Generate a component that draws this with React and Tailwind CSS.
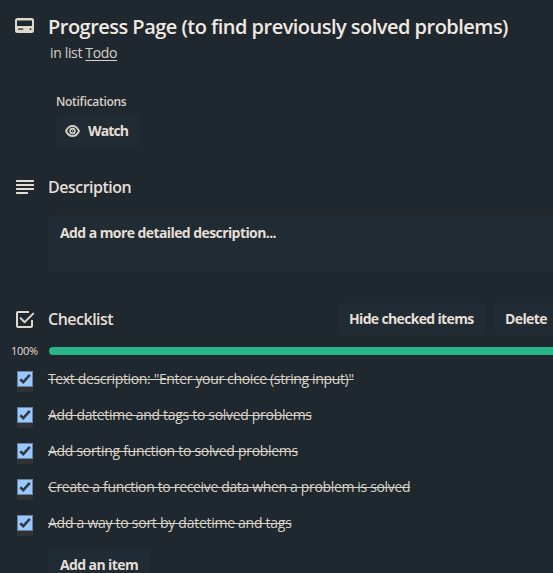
import React from "react";

const items = [
  { text: 'Text description: "Enter your choice (string input)"', tracking: "tracking-[-0.35px]" },
  { text: "Add datetime and tags to solved problems", tracking: "tracking-[-0.31px]" },
  { text: "Add sorting function to solved problems", tracking: "tracking-[-0.3px]" },
  { text: "Create a function to receive data when a problem is solved", tracking: "tracking-[-0.34px]" },
  { text: "Add a way to sort by datetime and tags", tracking: "tracking-[-0.27px]" },
];

function CardIcon() {
  return (
    <svg width="20" height="16" viewBox="0 0 20 16" className="block">
      <path
        fill="#ded8cd"
        fillRule="evenodd"
        d="M2.500 0h14A2.500 2.500 0 0 1 19 2.500v10a2.500 2.500 0 0 1-2.500 2.500h-14A2.500 2.500 0 0 1 0 12.500v-10A2.500 2.500 0 0 1 2.500 0zM2 2.500v5.500h15v-5.500zM3 10.600v1.200h5.300v-1.200zM15.500 10.300a.9.9 0 1 0 0 1.800.9.9 0 0 0 0-1.800z"
      />
    </svg>
  );
}

function DescriptionIcon() {
  return (
    <svg width="18" height="14" viewBox="0 0 18 14" className="block" fill="#e4ddd2">
      <rect width="18" height="2" rx=".5" />
      <rect y="4" width="18" height="2" rx=".5" />
      <rect y="8" width="18" height="2" rx=".5" />
      <rect y="12" width="12" height="2" rx=".5" />
    </svg>
  );
}

function ChecklistIcon() {
  return (
    <svg width="19" height="17" viewBox="0 0 19 17" className="block" fill="none" stroke="#ded8cd" strokeWidth="2">
      <path d="M13 1H2a1 1 0 0 0-1 1v13a1 1 0 0 0 1 1h13a1 1 0 0 0 1-1V9" />
      <path d="M4.700 7.300 8.600 11.200 17.200 2.600" strokeLinecap="round" />
    </svg>
  );
}

function EyeIcon() {
  return (
    <svg width="15" height="12" viewBox="0 0 15 12" className="block" fill="none" stroke="#d3cec5" strokeWidth="1.900">
      <path d="M1 6C2.500 2.700 4.700 1 7.500 1S12.500 2.700 14 6C12.500 9.300 10.300 11 7.500 11S2.500 9.300 1 6z" />
      <circle cx="7.500" cy="6" r="2.400" strokeWidth="1.600" />
      <circle cx="7.500" cy="6" r=".7" fill="#d3cec5" stroke="none" />
    </svg>
  );
}

function Checkbox() {
  return (
    <div className="mt-[2px] ml-[17px] h-[21px] w-4 shrink-0 bg-[#303335]">
      <div className="h-4 w-4 border border-[#67829f] bg-[#99c8ff]">
        <svg width="14" height="14" viewBox="0 0 14 14" className="block" fill="none" stroke="#34393f" strokeWidth="2.600">
          <path d="M2.300 7.300 5.300 10.200 11.800 2.800" />
        </svg>
      </div>
    </div>
  );
}

export default function App() {
  return (
    <div className="h-[573px] w-[553px] overflow-hidden bg-[#1f272f] font-['Open_Sans','Noto_Sans',sans-serif] whitespace-nowrap text-[#e5dfd6]">
      <header className="flex h-[42px] pt-[15px]">
        <div className="w-12 shrink-0 pt-[3px] pl-[15px]"><CardIcon /></div>
        <h1 className="text-xl leading-6 font-semibold tracking-[-0.52px] text-[#efe9e0]"><span>Progress Page (to find previously solved problems)</span></h1>
      </header>
      <p className="h-[52px] pl-[50px] text-sm leading-[22px] tracking-[-0.35px] text-[#d6d0c7]"><span>in list </span><a className="underline underline-offset-2">Todo</a></p>

      <section className="h-[77px] pl-[57px]">
        <h3 className="-ml-px h-[21px] text-xs leading-4 font-semibold tracking-[-0.3px] text-[#d6d0c7]"><span>Notifications</span></h3>
        <button className="flex h-8 w-[83px] items-center rounded-[3px] bg-[#202b33] pl-2">
          <EyeIcon />
          <span className="ml-2 text-sm leading-5 font-bold tracking-[-0.85px]">Watch</span>
        </button>
      </section>

      <section className="h-[132px]">
        <div className="flex h-[44px] pt-[6px]">
          <div className="w-12 shrink-0 pt-[3px] pl-4"><DescriptionIcon /></div>
          <h2 className="text-base leading-5 font-semibold tracking-[-0.5px]"><span>Description</span></h2>
        </div>
        <div className="ml-[49px] h-14 rounded-l-[3px] bg-[#202b33] pt-2 pl-[11px] text-sm leading-5 font-bold tracking-[-0.58px]"><span>Add a more detailed description...</span></div>
      </section>

      <section>
        <div className="flex h-8 items-center">
          <div className="w-12 shrink-0 pl-4"><ChecklistIcon /></div>
          <h2 className="w-[290px] shrink-0 text-base leading-5 font-semibold tracking-[-0.5px]"><span>Checklist</span></h2>
          <button className="h-8 w-[148px] shrink-0 rounded-[3px] bg-[#202b33] pl-[11px] text-left text-sm leading-5 font-bold tracking-[-0.66px]"><span>Hide checked items</span></button>
          <button className="ml-2 h-8 w-[70px] shrink-0 rounded-[3px] bg-[#202b33] pl-[11px] text-left text-sm leading-5 font-bold tracking-[-0.6px]"><span>Delete</span></button>
        </div>
        <div className="flex h-[34px] pt-3">
          <span className="-mt-1 w-[38px] shrink-0 pl-[11px] text-[11px] leading-4 tracking-[-0.3px]">100%</span>
          <div className="ml-[11px] h-2 flex-1 rounded-l-full bg-[#2bb58a]" />
        </div>
        <ul>
          {items.map((item) => (
            <li key={item.text} className="flex h-9">
              <Checkbox />
              <span className={`ml-[15px] text-sm leading-5 text-[#d8d2c7] line-through decoration-1 ${item.tracking}`}>{item.text}</span>
            </li>
          ))}
        </ul>
        <button className="ml-[49px] block h-8 w-[101px] rounded-[3px] bg-[#202b33] pl-[11px] text-left text-sm leading-5 font-bold tracking-[-0.6px]"><span>Add an item</span></button>
      </section>
    </div>
  );
}
